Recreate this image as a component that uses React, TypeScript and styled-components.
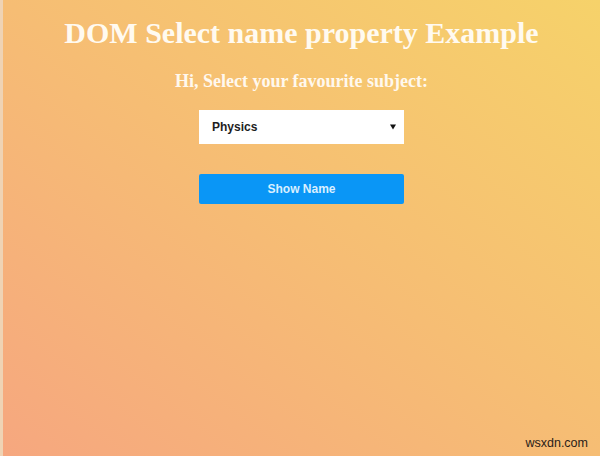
import React from 'react'
import styled, { createGlobalStyle } from 'styled-components'

const GlobalStyle = createGlobalStyle`
  html,
  body {
    margin: 0;
    padding: 0;
  }

  #root {
    min-height: 100vh;
  }
`

const Page = styled.div`
  position: relative;
  box-sizing: border-box;
  min-height: 100vh;
  padding-top: 15px;
  display: flex;
  flex-direction: column;
  align-items: center;
  border-left: 3px solid #efd3b4;
  background: linear-gradient(to top right, #f6a77f 0%, #f6bd74 50%, #f6d26a 100%);
`

const Title = styled.h1`
  margin: 0;
  font-family: 'Liberation Serif', 'Times New Roman', serif;
  font-size: 30px;
  line-height: 36px;
  font-weight: bold;
  color: #fffaf0;
  text-align: center;
`

const Subtitle = styled.h3`
  margin: 20px 0 0;
  font-family: 'Liberation Serif', 'Times New Roman', serif;
  font-size: 18px;
  line-height: 21px;
  font-weight: bold;
  color: #fff8ee;
  text-align: center;
`

const Form = styled.form`
  display: flex;
  flex-direction: column;
  width: 205px;
  margin-top: 18px;
  gap: 30px;
`

const SelectWrap = styled.div`
  position: relative;
  height: 34px;
`

const Select = styled.select`
  appearance: none;
  -webkit-appearance: none;
  box-sizing: border-box;
  width: 100%;
  height: 100%;
  padding: 0 24px 0 13px;
  border: none;
  border-radius: 0;
  background: #ffffff;
  font-family: 'Liberation Sans', Arial, sans-serif;
  font-size: 12px;
  font-weight: bold;
  color: #1e1e1e;
  outline: none;
`

const Arrow = styled.svg`
  position: absolute;
  right: 8px;
  top: 14px;
  width: 6px;
  height: 6px;
  pointer-events: none;
`

const Button = styled.button`
  box-sizing: border-box;
  height: 30px;
  border: none;
  border-radius: 2px;
  background: #0a96f6;
  font-family: 'Liberation Sans', Arial, sans-serif;
  font-size: 12px;
  font-weight: bold;
  color: #d9efff;
  cursor: pointer;
`

const Watermark = styled.span`
  position: absolute;
  right: 12px;
  bottom: 6px;
  font-family: 'Liberation Sans', Arial, sans-serif;
  font-size: 12.5px;
  color: #2a2118;
`

export default function App() {
  return (
    <>
      <GlobalStyle />
      <Page>
        <Title>DOM Select name property Example</Title>
        <Subtitle>Hi, Select your favourite subject:</Subtitle>
        <Form onSubmit={(e) => e.preventDefault()}>
          <SelectWrap>
            <Select name="subject" defaultValue="Physics">
              <option>Physics</option>
              <option>Chemistry</option>
              <option>Maths</option>
              <option>Biology</option>
            </Select>
            <Arrow viewBox="0 0 6 6">
              <path d="M0 0.5 L6 0.5 L3 5.5 Z" fill="#111" />
            </Arrow>
          </SelectWrap>
          <Button type="button">Show Name</Button>
        </Form>
        <Watermark>wsxdn.com</Watermark>
      </Page>
    </>
  )
}
